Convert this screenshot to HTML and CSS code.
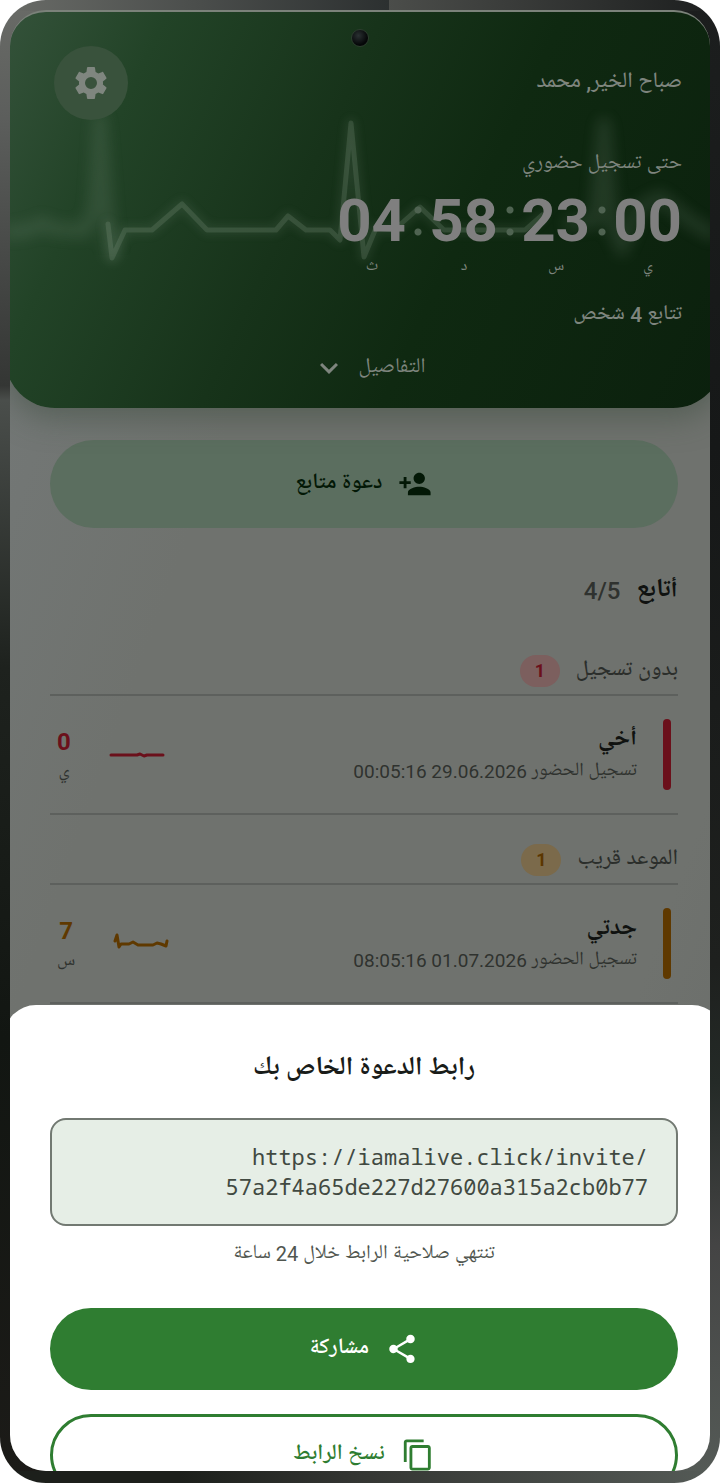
FILE: index.html
```html
<!DOCTYPE html>
<html lang="ar" dir="rtl">
<head>
    <meta charset="UTF-8">
    <meta name="viewport" content="width=device-width, initial-scale=1.0">
    <title>I am alive</title>
    <link rel="stylesheet" href="styles.css">
</head>
<body>
    <div class="phone">
        <div class="screen">
            <span class="camera"></span>

            <header class="hero">
                <svg class="pulse" viewBox="0 0 700 180" preserveAspectRatio="none" aria-hidden="true">
                    <g class="pulse-blur">
                        <path d="M0 123 L20 121 L32 114 L44 120 L75 122 L84 100 L90 10 L97 100 L102 145"/>
                        <path d="M560 115 L585 112 L594 15 L602 115 L612 140 L628 100 L650 88 L680 112 L700 124"/>
                    </g>
                    <path class="pulse-glow" d="M98 115 L102 149 L115 121 L142 121 L172 95 L197 121 L266 121 L278 107 L296 121 L320 121 L330 131 L341 14 L354 148 L366 119 L384 121 L410 98 L434 121 L515 121 L532 106"/>
                    <path class="pulse-line" d="M98 115 L102 149 L115 121 L142 121 L172 95 L197 121 L266 121 L278 107 L296 121 L320 121 L330 131 L341 14 L354 148 L366 119 L384 121 L410 98 L434 121 L515 121 L532 106"/>
                </svg>

                <div class="hero-top">
                    <p class="greeting">صباح الخير, محمد</p>
                    <button class="settings" aria-label="الإعدادات">
                        <svg viewBox="0 0 24 24"><path d="M19.14 12.94c.04-.3.06-.61.06-.94 0-.32-.02-.64-.07-.94l2.03-1.58c.18-.14.23-.41.12-.61l-1.92-3.32c-.12-.22-.37-.29-.59-.22l-2.39.96c-.5-.38-1.03-.7-1.62-.94l-.36-2.54c-.04-.24-.24-.41-.48-.41h-3.84c-.24 0-.43.17-.47.41l-.36 2.54c-.59.24-1.13.57-1.62.94l-2.39-.96c-.22-.08-.47 0-.59.22L2.74 8.87c-.12.21-.08.47.12.61l2.03 1.58c-.05.3-.09.63-.09.94s.02.64.07.94l-2.03 1.58c-.18.14-.23.41-.12.61l1.92 3.32c.12.22.37.29.59.22l2.39-.96c.5.38 1.03.7 1.62.94l.36 2.54c.05.24.24.41.48.41h3.84c.24 0 .44-.17.47-.41l.36-2.54c.59-.24 1.13-.56 1.62-.94l2.39.96c.22.08.47 0 .59-.22l1.92-3.32c.12-.22.07-.47-.12-.61l-2.01-1.58zM12 15.6A3.6 3.6 0 1 1 12 8.4a3.6 3.6 0 0 1 0 7.2z"/></svg>
                    </button>
                </div>

                <p class="until">حتى تسجيل حضوري</p>
                <div class="timer">
                    <div class="unit"><b>00</b><small>ي</small></div>
                    <i class="colon"></i>
                    <div class="unit"><b>23</b><small>س</small></div>
                    <i class="colon"></i>
                    <div class="unit"><b>58</b><small>د</small></div>
                    <i class="colon"></i>
                    <div class="unit"><b>04</b><small>ث</small></div>
                </div>
                <p class="watching">تتابع 4 شخص</p>
                <button class="details">
                    التفاصيل
                    <svg viewBox="0 0 24 24"><path d="M7.41 8.59 12 13.17l4.59-4.58L18 10l-6 6-6-6z"/></svg>
                </button>
            </header>

            <main class="content">
                <button class="invite">
                    <svg viewBox="0 0 24 24"><path d="M15 12c2.21 0 4-1.79 4-4s-1.79-4-4-4-4 1.79-4 4 1.79 4 4 4zm-9-2V7H4v3H1v2h3v3h2v-3h3v-2H6zm9 4c-2.67 0-8 1.34-8 4v2h16v-2c0-2.66-5.33-4-8-4z"/></svg>
                    دعوة متابع
                </button>

                <h2 class="list-title">أتابع <span>4/5</span></h2>

                <section class="group missed">
                    <h3>بدون تسجيل <span class="badge">1</span></h3>
                    <div class="person">
                        <div class="info">
                            <strong>أخي</strong>
                            <p>تسجيل الحضور <bdi>29.06.2026</bdi> <bdi>00:05:16</bdi></p>
                        </div>
                        <svg class="spark" viewBox="0 0 56 24"><path d="M2 12H28L31 11L35 13L38 12H54"/></svg>
                        <div class="left"><b>0</b><small>ي</small></div>
                    </div>
                </section>

                <section class="group soon">
                    <h3>الموعد قريب <span class="badge">1</span></h3>
                    <div class="person">
                        <div class="info">
                            <strong>جدتي</strong>
                            <p>تسجيل الحضور <bdi>01.07.2026</bdi> <bdi>08:05:16</bdi></p>
                        </div>
                        <svg class="spark" viewBox="0 0 56 24"><path d="M2 9L4 3L6 15L8 12H16L20 10L25 13H40L44 11L48 12L53 14L54 9"/></svg>
                        <div class="left"><b>7</b><small>س</small></div>
                    </div>
                </section>
            </main>

            <div class="sheet" role="dialog" aria-labelledby="sheet-title">
                <h2 id="sheet-title">رابط الدعوة الخاص بك</h2>
                <p class="link" dir="ltr">https://iamalive.click/invite/<br>57a2f4a65de227d27600a315a2cb0b77</p>
                <p class="hint">تنتهي صلاحية الرابط خلال 24 ساعة</p>
                <button class="share">
                    <svg viewBox="0 0 24 24"><path d="M18 16.08c-.76 0-1.44.3-1.96.77L8.91 12.7c.05-.23.09-.46.09-.7s-.04-.47-.09-.7l7.05-4.11c.54.5 1.25.81 2.04.81 1.66 0 3-1.34 3-3s-1.34-3-3-3-3 1.34-3 3c0 .24.04.47.09.7L8.04 9.81C7.5 9.31 6.79 9 6 9c-1.66 0-3 1.34-3 3s1.34 3 3 3c.79 0 1.5-.31 2.04-.81l7.12 4.16c-.05.21-.08.43-.08.65 0 1.61 1.31 2.92 2.92 2.92s2.92-1.31 2.92-2.92-1.31-2.92-2.92-2.92z"/></svg>
                    مشاركة
                </button>
                <button class="copy">
                    <svg viewBox="0 0 24 24"><path d="M16 1H4c-1.1 0-2 .9-2 2v14h2V3h12V1zm3 4H8c-1.1 0-2 .9-2 2v14c0 1.1.9 2 2 2h11c1.1 0 2-.9 2-2V7c0-1.1-.9-2-2-2zm0 16H8V7h11v14z"/></svg>
                    نسخ الرابط
                </button>
            </div>
        </div>
    </div>
</body>
</html>
```
FILE: styles.css
```css
*{
    box-sizing: border-box;
}

body, h2, h3, p{
    margin: 0;
}

body{
    background: #fff;
    font-family: Roboto, "Noto Naskh Arabic UI", "Noto Naskh Arabic", "DejaVu Sans", sans-serif;
    font-size: 20px;
    line-height: 24px;
}

button{
    display: flex;
    align-items: center;
    justify-content: center;
    border: 0;
    padding: 0;
    background: none;
    font: inherit;
    cursor: pointer;
}

svg{
    fill: currentColor;
}

/* phone frame */
.phone{
    display: flex;
    height: 100vh;
    padding: 10px 10px 12px;
    border-radius: 46px;
    background:
        linear-gradient(90deg, #6a6c68, #2c3030 54%, #4b4d4a 54%, #1c1e1e) top / 100% 11px no-repeat,
        linear-gradient(90deg, #1c1f1b, #1c1f1b 25%, #343633 50%, #555b57) bottom / 100% 12px no-repeat,
        linear-gradient(#696b67, #5c5e5c 8%, #343634 26%, #4a4e4b 27%, #1e221e 45%, #121612 70%, #1c1b18) left / 50% 100% no-repeat,
        linear-gradient(#1c1e1e, #161818 30%, #1e201e 65%, #242a27 73%, #444 84%, #555b57) right / 50% 100% no-repeat;
}

.screen{
    position: relative;
    flex: 1;
    overflow: hidden;
    border-top: 2px solid #7b827a;
    border-radius: 36px;
    background: linear-gradient(110deg, #757a7a, #6f726e 30%, #6f726e 80%, #686b68);
}

.camera{
    position: absolute;
    z-index: 1;
    top: 17px;
    left: calc(50% - 9px);
    width: 18px;
    height: 18px;
    border: 1px solid #2c3c2e;
    border-radius: 50%;
    background: radial-gradient(circle at 40% 35%, #2a3032, #050708 65%);
}

/* header */
.hero{
    position: relative;
    margin: 0 -13px 0 -5px;
    padding: 34px 41px 14px 49px;
    border-radius: 0 0 50px 50px;
    background: linear-gradient(115deg, #34523a, #224327 18%, #17331a 42%, #0f2911 62%, #0b200d);
    box-shadow: 0 10px 30px rgba(60, 75, 62, .5);
    color: #7e857e;
}

.pulse{
    position: absolute;
    top: 97px;
    left: 5px;
    width: calc(100% - 18px);
    height: 180px;
    fill: none;
    stroke: #8fa392;
    stroke-linejoin: round;
    stroke-linecap: round;
}

.pulse-line{
    stroke-width: 5;
    opacity: .2;
}

.pulse-glow{
    stroke-width: 10;
    opacity: .13;
    filter: blur(5px);
}

.pulse-blur{
    stroke-width: 14;
    opacity: .16;
    filter: blur(7px);
}

.hero-top{
    position: relative;
    display: flex;
    align-items: center;
    justify-content: space-between;
}

.greeting{
    font-size: 22px;
    font-weight: 500;
}

.settings{
    width: 74px;
    height: 74px;
    border-radius: 50%;
    background: #39523c;
    color: #7f867f;
}

.settings svg{
    width: 40px;
    height: 40px;
}

.until{
    position: relative;
    margin-top: 32px;
    font-size: 21px;
}

.timer{
    position: relative;
    display: flex;
    margin-top: 13px;
}

.unit{
    width: 68px;
    text-align: center;
}

.unit b{
    display: block;
    color: #7f7f7f;
    font-size: 60px;
    line-height: 64px;
}

.unit small{
    display: block;
    margin-top: 2px;
    font-size: 16px;
    line-height: 24px;
}

.colon{
    width: 24px;
    height: 30px;
    margin-top: 17px;
    background:
        radial-gradient(circle, #4f6351 3px, transparent 4px) top / 100% 8px no-repeat,
        radial-gradient(circle, #4f6351 3px, transparent 4px) bottom / 100% 8px no-repeat;
}

.watching{
    position: relative;
    margin-top: 24px;
    font-size: 21px;
    font-weight: 500;
}

.details{
    position: relative;
    gap: 12px;
    margin: 15px auto 0;
    padding: 8px 0;
    color: inherit;
    font-size: 21px;
}

.details svg{
    width: 36px;
    height: 36px;
}

/* list */
.content{
    padding: 32px 32px 0 40px;
    color: #2b2e2b;
}

.invite{
    gap: 16px;
    width: 100%;
    height: 88px;
    border-radius: 44px;
    background: #5b6e5f;
    color: #031806;
    font-size: 22px;
    font-weight: 600;
}

.invite svg{
    width: 34px;
    height: 34px;
}

.list-title{
    display: flex;
    gap: 16px;
    margin-top: 46px;
    color: #101210;
    font-size: 26px;
    line-height: 34px;
}

.list-title span{
    color: #2f322f;
    font-size: 24px;
    font-weight: 500;
}

.group{
    margin-top: 29px;
}

.list-title + .group{
    margin-top: 47px;
}

.group h3{
    display: flex;
    align-items: center;
    gap: 16px;
    padding-bottom: 7px;
    border-bottom: 2px solid #5d605d;
    font-size: 22px;
    font-weight: 500;
}

.badge{
    width: 40px;
    border-radius: 16px;
    font-size: 18px;
    font-weight: 700;
    line-height: 32px;
    text-align: center;
}

.missed .badge{
    background: #7c5f5e;
    color: #6b101b;
}

.soon .badge{
    background: #7b6a4b;
    color: #5c3600;
}

.person{
    display: flex;
    align-items: center;
    gap: 26px;
    padding: 23px 7px;
    border-bottom: 2px solid #5d605d;
}

.person::before{
    content: "";
    width: 8px;
    height: 71px;
    border-radius: 4px;
    background: currentColor;
}

.missed .person{
    color: #6b101b;
}

.soon .person{
    color: #5f3900;
}

.info{
    flex: 1;
    color: #2f322f;
}

.info strong{
    display: block;
    color: #101210;
    font-size: 24px;
    line-height: 34px;
}

.info p{
    font-size: 19px;
    line-height: 30px;
}

.spark{
    width: 56px;
    height: 24px;
    margin-left: 12px;
    fill: none;
    stroke: currentColor;
    stroke-width: 3;
    stroke-linecap: round;
    stroke-linejoin: round;
}

.left{
    min-width: 14px;
    padding-top: 4px;
    text-align: center;
}

.left b, .left small{
    display: block;
    font-size: 24px;
    line-height: 30px;
}

.left small{
    color: #2f322f;
    font-size: 18px;
}

/* bottom sheet */
.sheet{
    position: absolute;
    right: -14px;
    bottom: -25px;
    left: -6px;
    padding: 46px 46px 0;
    border-radius: 32px 32px 0 0;
    background: #fff;
    text-align: center;
}

.sheet h2{
    color: #191c19;
    font-size: 26px;
    line-height: 36px;
}

.link{
    margin-top: 31px;
    padding: 21px 28px 23px;
    border: 2px solid #727972;
    border-radius: 16px;
    background: #e6eee6;
    color: #414941;
    font-family: "Noto Sans Mono", "DejaVu Sans Mono", monospace;
    font-size: 22px;
    line-height: 30px;
    text-align: right;
}

.hint{
    margin: 16px 0 42px;
    color: #50564f;
}

.share, .copy{
    gap: 16px;
    width: 100%;
    height: 82px;
    border-radius: 41px;
    font-size: 22px;
    font-weight: 600;
}

.share{
    background: #2f7d31;
    color: #fff;
}

.copy{
    margin-top: 24px;
    border: 3px solid #2f7d31;
    color: #2f7d31;
}

.share svg, .copy svg{
    width: 34px;
    height: 34px;
}
```
